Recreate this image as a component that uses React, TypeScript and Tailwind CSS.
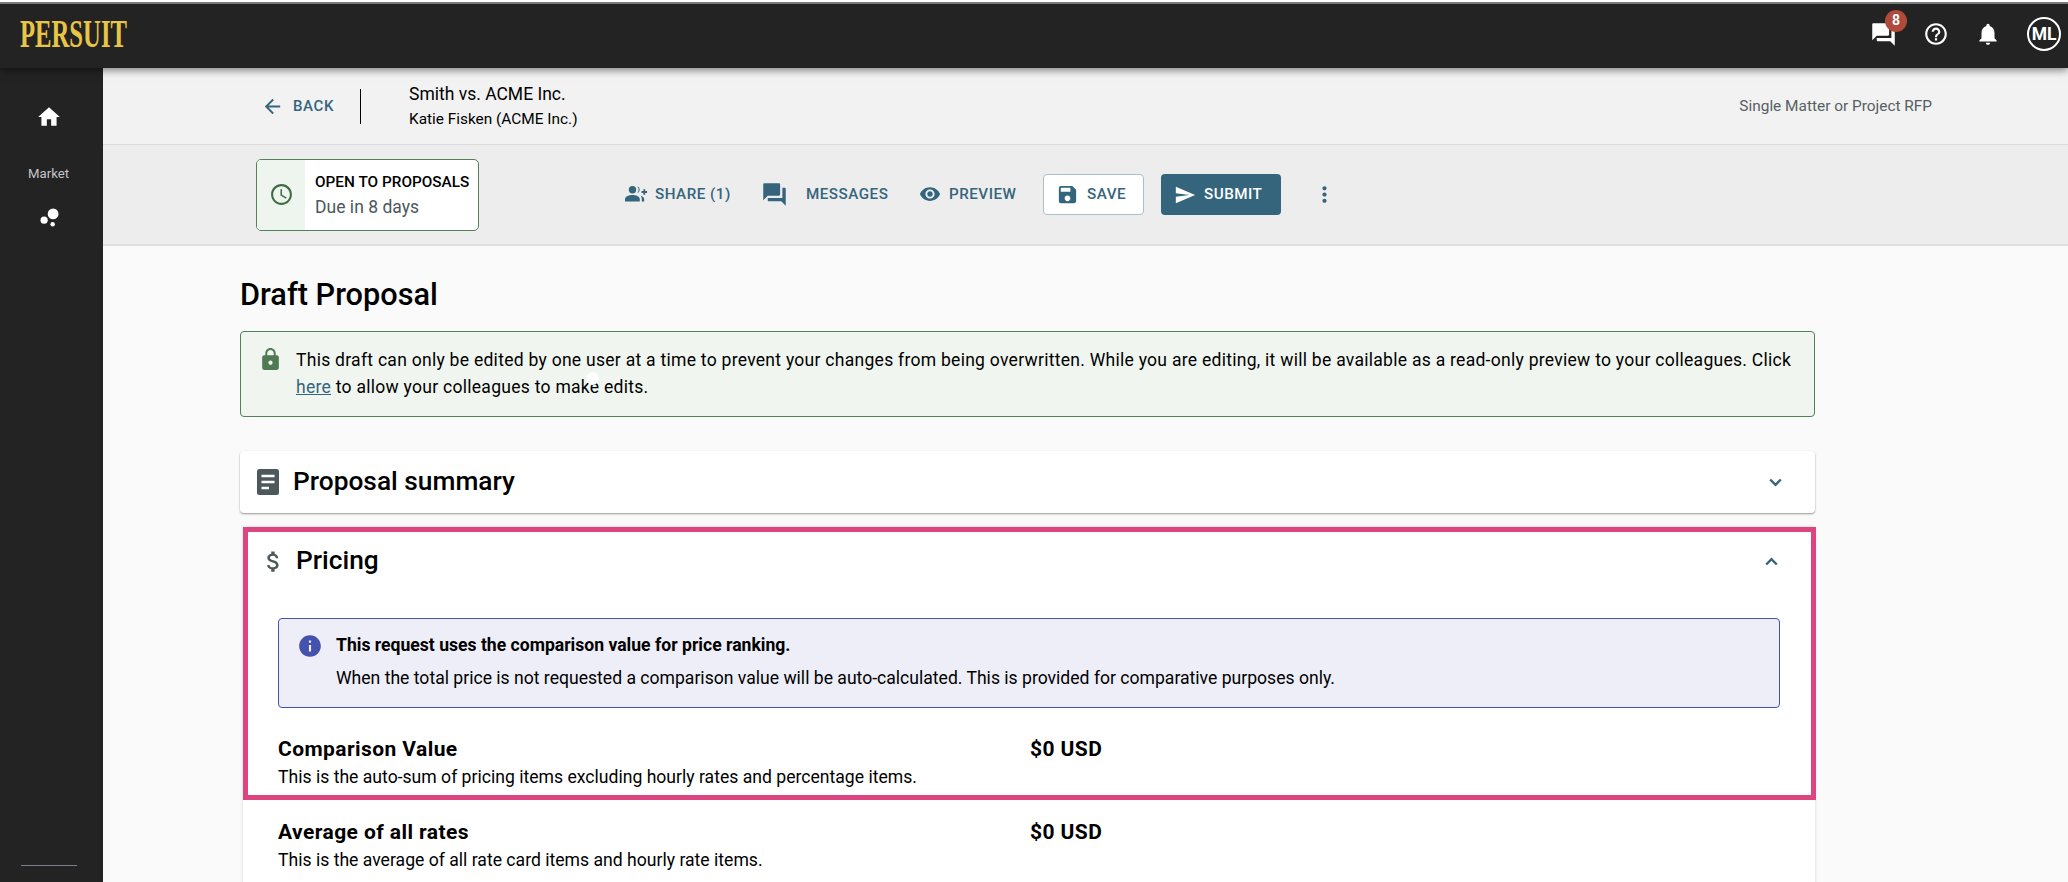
import React from "react";
import {
  MdArrowBack,
  MdAttachMoney,
  MdBubbleChart,
  MdForum,
  MdHelpOutline,
  MdHome,
  MdInfo,
  MdLock,
  MdMoreVert,
  MdNotifications,
  MdSave,
  MdSchedule,
  MdSend,
  MdVisibility,
} from "react-icons/md";

interface RowProps {
  title: string;
  value: string;
  note: string;
}

const ShareIcon = () => (
  <svg viewBox="0 0 23 16" className="h-4 w-[23px]" fill="currentColor">
    <circle cx="7.500" cy="3.700" r="3.700" />
    <path d="M0 15.500v-2.300C0 10.200 4.500 9 7.500 9s7.300 1.200 7.300 4.200v2.300z" />
    <path d="M12.200 .2a3.700 3.700 0 0 1 0 7a5.500 5.500 0 0 0 0-7z" />
    <path d="M15.500 9.400c2.200.800 3.700 2 3.700 3.800v2.300h-2.400v-2.300c0-1.500-.400-2.800-1.300-3.800z" />
    <path d="M18.400 3.200h1.800v1.900h1.900v1.800h-1.900v1.900h-1.800V6.900h-1.900V5.100h1.900z" />
  </svg>
);

const SummaryIcon = () => (
  <svg viewBox="0 0 22 26" className="h-[26px] w-[22px]">
    <rect width="22" height="26" rx="2.500" fill="#4c585c" />
    <path d="M4.500 7h13M4.500 13h13M4.500 19h7.500" stroke="#fff" strokeWidth="2.400" />
  </svg>
);

const Chevron: React.FC<{ up?: boolean }> = ({ up }) => (
  <svg viewBox="0 0 13 9" className="h-[9px] w-[13px]" fill="none">
    <path
      d={up ? "M1.200 7.500l5.300-5.300 5.300 5.300" : "M1.200 1.500l5.300 5.300 5.300-5.300"}
      stroke="#34657d"
      strokeWidth="2.400"
    />
  </svg>
);

const Header = () => (
  <header className="relative z-10 flex h-[68px] shrink-0 items-center justify-between border-t-2 border-white bg-[#232323] pr-[7px] pb-0.5 pl-5 text-white shadow-[0_2px_8px_rgba(0,0,0,0.5)]">
    <div className="absolute inset-x-0 top-0 h-0.5 bg-[#7b7b7b]" />
    <span className="origin-left scale-x-[0.617] font-['Liberation_Serif',serif] text-[40px] leading-[50px] font-bold text-[#e8c547]">
      PERSUIT
    </span>
    <div className="flex items-center">
      <div className="relative mr-[26px]">
        <MdForum size={27} />
        <span className="absolute -top-[11px] left-[15px] flex h-[22px] w-[22px] items-center justify-center rounded-full bg-[#b04a3c] text-[14px] font-bold">
          8
        </span>
      </div>
      <MdHelpOutline size={26} className="mr-[26px]" />
      <MdNotifications size={26} className="mr-[26px]" />
      <div className="flex h-[34px] w-[34px] items-center justify-center rounded-full border-2 border-white text-[17.5px] font-bold tracking-[-0.2px]">
        ML
      </div>
    </div>
  </header>
);

const Sidebar = () => (
  <nav className="flex w-[103px] shrink-0 flex-col bg-[#232323] text-white">
    <MdHome size={26} className="mt-9 ml-9" />
    <span className="mt-[35px] ml-7 text-[13.2px] leading-[18px] text-[#c4c4ca]">Market</span>
    <MdBubbleChart size={27} className="mt-[21px] ml-9" />
    <hr className="mt-auto mb-4 ml-[21px] w-14 border-[#7d808b]" />
  </nav>
);

const TitleBar = () => (
  <div className="flex h-[77px] shrink-0 items-center border-b border-[#dcdcdc] bg-[#f2f2f2] pr-[136px] pl-[158px]">
    <button className="flex items-center text-[15px] font-medium tracking-[0.6px] text-[#34657d]">
      <MdArrowBack size={23} className="mr-[9px]" />
      BACK
    </button>
    <div className="ml-[26px] h-[35px] w-px bg-black" />
    <div className="ml-12 whitespace-nowrap text-black">
      <p className="text-[17.5px] leading-[26px]">Smith vs. ACME Inc.</p>
      <p className="text-[15.4px] leading-[24px]">Katie Fisken (ACME Inc.)</p>
    </div>
    <span className="mt-0.5 ml-auto whitespace-nowrap text-[15.4px] text-[#566063]">
      Single Matter or Project RFP
    </span>
  </div>
);

const Toolbar = () => (
  <div className="flex h-[101px] shrink-0 items-center border-b-2 border-[#e0e0e0] bg-[#ededed] pl-[153px] text-[15.2px] font-medium tracking-[0.5px] whitespace-nowrap text-[#34657d]">
    <div className="flex h-[72px] w-[223px] overflow-hidden rounded-[5px] border border-[#54805a] bg-white">
      <div className="flex w-12 items-center justify-center bg-[#eef5ee] text-[#3f6b45]">
        <MdSchedule size={25} />
      </div>
      <div className="pt-[9px] pl-[10px] tracking-[0.03px]">
        <p className="text-[15.3px] leading-[26px] text-black">OPEN TO PROPOSALS</p>
        <p className="text-[17.5px] leading-[25px] font-normal text-[#4c585c]">Due in 8 days</p>
      </div>
    </div>
    <button className="ml-[146px] flex w-[138px] items-center">
      <ShareIcon />
      <span className="ml-[7px]">SHARE (1)</span>
    </button>
    <button className="flex w-[156px] items-center">
      <MdForum size={27} className="-ml-0.5" />
      <span className="ml-[18px]">MESSAGES</span>
    </button>
    <button className="flex w-[124px] items-center">
      <MdVisibility size={22} />
      <span className="ml-2">PREVIEW</span>
    </button>
    <button className="flex h-[41px] w-[101px] items-center rounded-[4px] border border-[#a9c0ca] bg-white pl-3">
      <MdSave size={23} />
      <span className="ml-2">SAVE</span>
    </button>
    <button className="ml-[17px] flex h-[41px] w-[120px] items-center rounded-[4px] bg-[#34657d] pl-[13px] text-white">
      <MdSend size={22} />
      <span className="ml-2">SUBMIT</span>
    </button>
    <MdMoreVert size={25} className="ml-[31px]" />
  </div>
);

const PriceRow: React.FC<RowProps> = ({ title, value, note }) => (
  <div className="h-[83px]">
    <div className="flex text-[21px] leading-[30px] font-bold tracking-[0.42px]">
      <h3 className="w-[752px]">{title}</h3>
      <span>{value}</span>
    </div>
    <p className="text-[17.6px] leading-[26px]">{note}</p>
  </div>
);

const App = () => {
  return (
    <div className="flex h-[882px] w-[2068px] flex-col overflow-hidden bg-[#fafafa] font-['Roboto',sans-serif] text-black">
      <Header />
      <div className="flex min-h-0 flex-1">
        <Sidebar />
        <div className="flex min-w-0 flex-1 flex-col">
          <TitleBar />
          <Toolbar />
          <main className="ml-[137px] w-[1575px]">
            <h1 className="mt-[29px] text-[30.7px] leading-10 font-medium">Draft Proposal</h1>

            <section className="relative mt-4 flex h-[86px] rounded-[4px] border border-[#54805a] bg-[#f0f5ef] pl-[17px] whitespace-nowrap">
              <MdLock size={25} className="mt-[15px] text-[#4f7a52]" />
              <p className="mt-[15px] ml-[13px] text-[17.55px] leading-[26.5px] tracking-[0.265px]">
                This draft can only be edited by one user at a time to prevent your changes from
                being overwritten. While you are editing, it will be available as a read-only
                preview to your colleagues. Click
                <br />
                <a href="#" className="text-[#34657d] underline">
                  here
                </a>{" "}
                to allow your colleagues to make edits.
              </p>
              <span className="absolute top-[40px] left-[345px] h-[13px] w-[13px] rounded-full bg-white" />
            </section>

            <section className="mt-[34px] flex h-[62px] items-center rounded-[4px] bg-white pr-[33px] pl-[17px] shadow-[0_1px_2px_rgba(0,0,0,0.4)]">
              <SummaryIcon />
              <h2 className="ml-[14px] text-[26.3px] font-medium">Proposal summary</h2>
              <div className="ml-auto">
                <Chevron />
              </div>
            </section>

            <section className="mt-[14px] ml-[3px] h-[400px] w-[1572px] bg-white shadow-[0_0_3px_rgba(0,0,0,0.15)]">
              <div className="h-[273px] w-[1573px] border-5 border-[#dc4580] px-[30px]">
                <div className="-ml-[10px] flex h-[58px] items-center pr-[3px]">
                  <MdAttachMoney size={27} className="-ml-2 text-[#4c585c]" />
                  <h2 className="ml-[9px] text-[26.3px] font-medium">Pricing</h2>
                  <div className="ml-auto">
                    <Chevron up />
                  </div>
                </div>
                <div className="mt-7 flex h-[90px] w-[1502px] rounded-[4px] border border-[#4452ae] bg-[#edeef7] pl-[18px]">
                  <MdInfo size={26} className="mt-[14px] text-[#4452ae]" />
                  <div className="mt-[12px] ml-[13px] text-[17.58px]">
                    <p className="leading-[29px] font-bold">
                      This request uses the comparison value for price ranking.
                    </p>
                    <p className="leading-[36px]">
                      When the total price is not requested a comparison value will be
                      auto-calculated. This is provided for comparative purposes only.
                    </p>
                  </div>
                </div>
                <div className="mt-[26px]">
                  <PriceRow
                    title="Comparison Value"
                    value="$0 USD"
                    note="This is the auto-sum of pricing items excluding hourly rates and percentage items."
                  />
                </div>
              </div>
              <div className="mt-[17px] px-[35px]">
                <PriceRow
                  title="Average of all rates"
                  value="$0 USD"
                  note="This is the average of all rate card items and hourly rate items."
                />
              </div>
            </section>
          </main>
        </div>
      </div>
    </div>
  );
};

export default App;
